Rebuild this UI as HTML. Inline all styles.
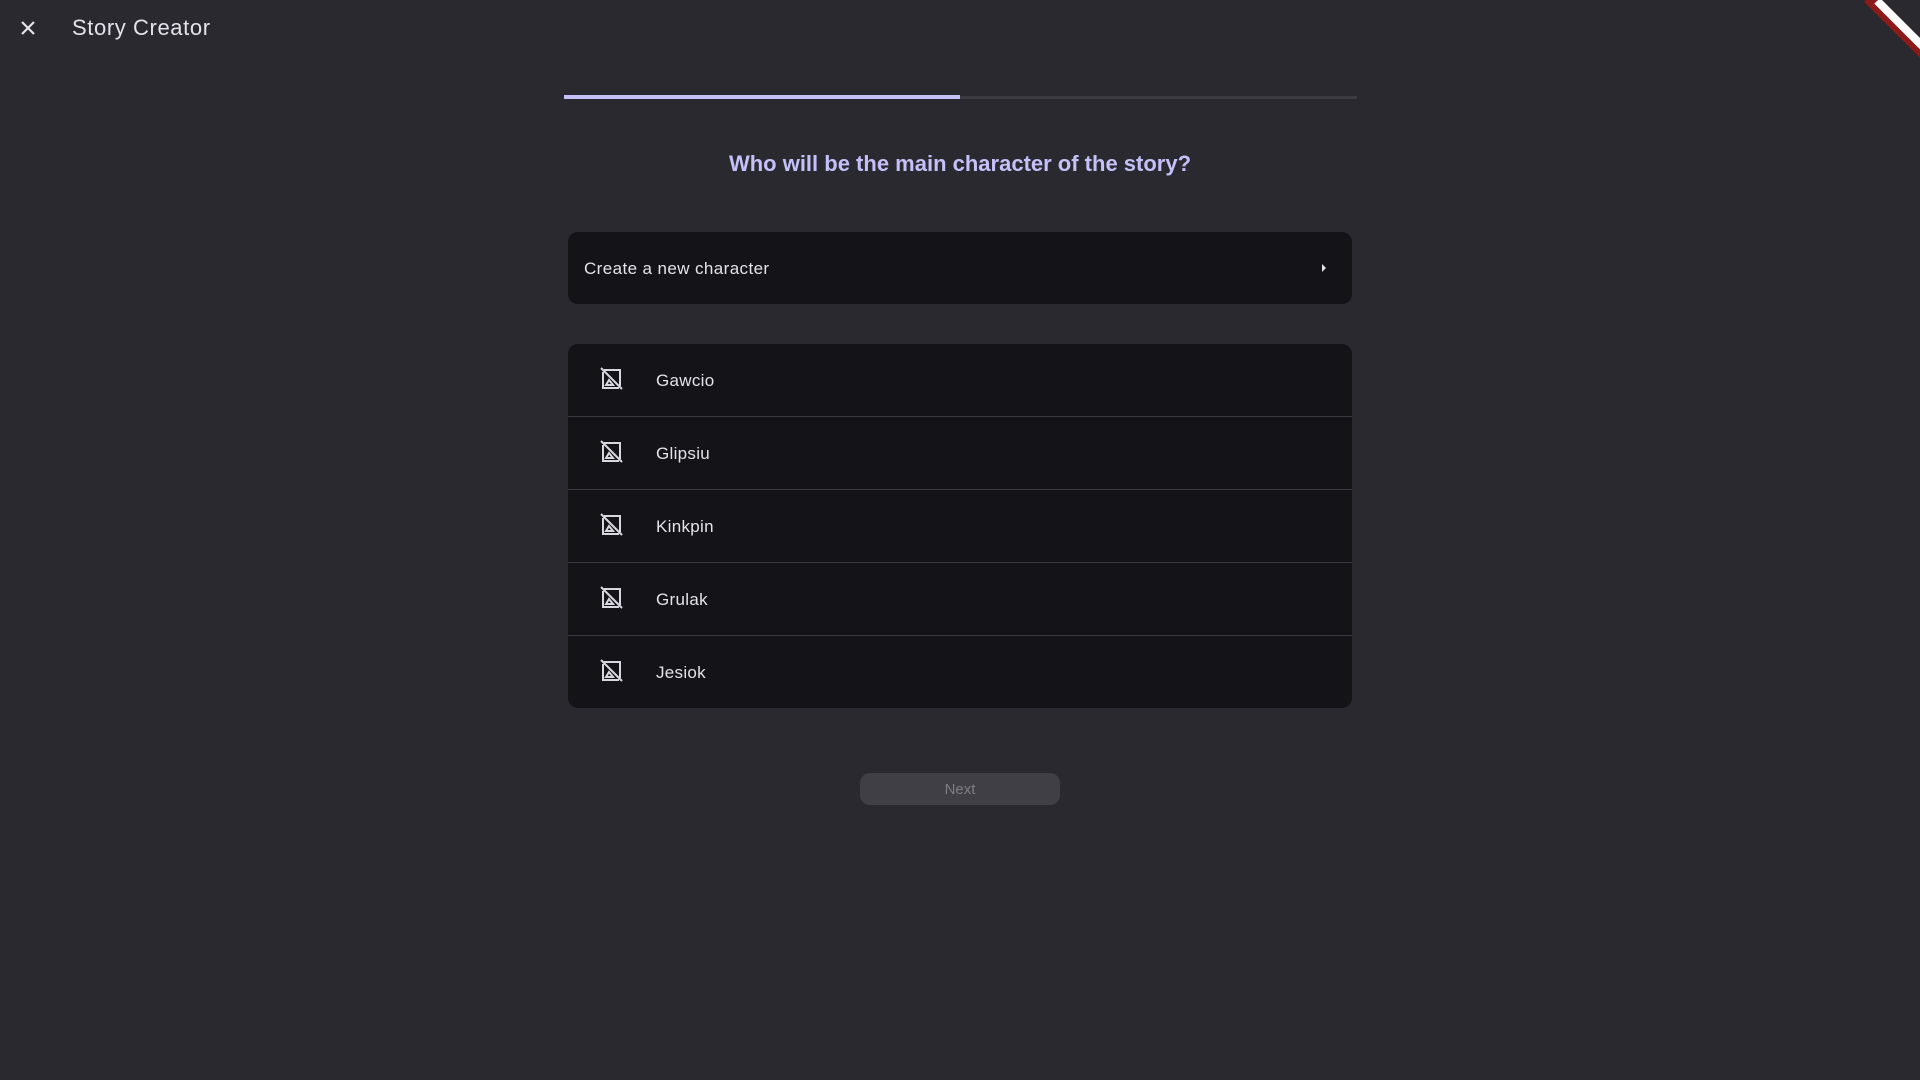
<!DOCTYPE html>
<html><head><style>
body{margin:0;width:1920px;height:1080px;background:#2a2930;font-family:"Liberation Sans",sans-serif;position:relative;overflow:hidden;color:#e4e2ea}
.abs{position:absolute}
.card{position:absolute;left:568px;width:784px;background:#141318;border-radius:10px}
.row{height:72px;border-bottom:1px solid #3a3940;font-size:17px;position:relative}
.row:last-child{border-bottom:none}
.row svg{position:absolute;left:31px;top:23px}
.row span{position:absolute;left:88px;top:27px;letter-spacing:0.3px}
</style></head><body>
<svg class="abs" style="left:19px;top:19px" width="18" height="18" viewBox="0 0 18 18"><path d="M3 3L15 15M15 3L3 15" stroke="#e4e2ea" stroke-width="2.2"/></svg>
<div class="abs" style="left:72px;top:15px;font-size:22px;letter-spacing:0.6px;color:#e4e2ea">Story Creator</div>
<div class="abs" style="left:1874px;top:-8px;width:90px;height:14px;background:#8b1a1a;transform:rotate(45deg);transform-origin:0 0"></div>
<div class="abs" style="left:1880px;top:-2px;width:70px;height:8px;background:#fff;transform:rotate(45deg);transform-origin:0 0"></div>
<div class="abs" style="left:564px;top:96px;width:793px;height:3px;background:#3c3b42"></div>
<div class="abs" style="left:564px;top:95px;width:396px;height:4px;background:#c3c1f7"></div>
<div class="abs" style="left:0;width:1920px;top:151px;text-align:center;font-size:22px;color:#c3c1f7;font-weight:bold">Who will be the main character of the story?</div>
<div class="card" style="top:232px;height:72px">
<div class="abs" style="left:16px;top:27px;font-size:17px;letter-spacing:0.4px">Create a new character</div>
<svg class="abs" style="left:752px;top:31px" width="8" height="10"><path d="M2 1L6 5L2 9Z" fill="#e4e2ea"/></svg>
</div>
<div class="card" style="top:344px">
<div class="row"><svg width="24" height="24" viewBox="0 0 24 24" fill="none" stroke="#d8d6df" stroke-width="2"><path d="M5 3h16v16"/><path d="M4 5v16h16"/><path d="M7 18l3-5 4 5z"/><path d="M2 1l21 21"/></svg><span>Gawcio</span></div>
<div class="row"><svg width="24" height="24" viewBox="0 0 24 24" fill="none" stroke="#d8d6df" stroke-width="2"><path d="M5 3h16v16"/><path d="M4 5v16h16"/><path d="M7 18l3-5 4 5z"/><path d="M2 1l21 21"/></svg><span>Glipsiu</span></div>
<div class="row"><svg width="24" height="24" viewBox="0 0 24 24" fill="none" stroke="#d8d6df" stroke-width="2"><path d="M5 3h16v16"/><path d="M4 5v16h16"/><path d="M7 18l3-5 4 5z"/><path d="M2 1l21 21"/></svg><span>Kinkpin</span></div>
<div class="row"><svg width="24" height="24" viewBox="0 0 24 24" fill="none" stroke="#d8d6df" stroke-width="2"><path d="M5 3h16v16"/><path d="M4 5v16h16"/><path d="M7 18l3-5 4 5z"/><path d="M2 1l21 21"/></svg><span>Grulak</span></div>
<div class="row"><svg width="24" height="24" viewBox="0 0 24 24" fill="none" stroke="#d8d6df" stroke-width="2"><path d="M5 3h16v16"/><path d="M4 5v16h16"/><path d="M7 18l3-5 4 5z"/><path d="M2 1l21 21"/></svg><span>Jesiok</span></div>
</div>
<div class="abs" style="left:860px;top:773px;width:200px;height:32px;border-radius:10px;background:#403f46;color:#7e7d85;font-size:15px;text-align:center;line-height:33px">Next</div>
</body></html>
